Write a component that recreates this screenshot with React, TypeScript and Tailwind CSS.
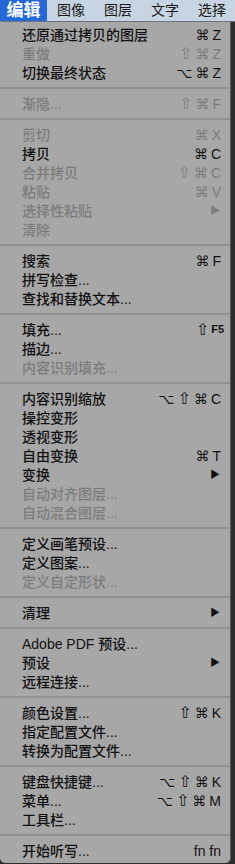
type Item = { label: string; keys?: string; disabled?: boolean; sub?: boolean; small?: boolean } | "sep";

const items: Item[] = [
  { label: "还原通过拷贝的图层", keys: "⌘Z" },
  { label: "重做", keys: "⇧⌘Z", disabled: true },
  { label: "切换最终状态", keys: "⌥⌘Z" },
  "sep",
  { label: "渐隐...", keys: "⇧⌘F", disabled: true },
  "sep",
  { label: "剪切", keys: "⌘X", disabled: true },
  { label: "拷贝", keys: "⌘C" },
  { label: "合并拷贝", keys: "⇧⌘C", disabled: true },
  { label: "粘贴", keys: "⌘V", disabled: true },
  { label: "选择性粘贴", sub: true, disabled: true },
  { label: "清除", disabled: true },
  "sep",
  { label: "搜索", keys: "⌘F" },
  { label: "拼写检查..." },
  { label: "查找和替换文本..." },
  "sep",
  { label: "填充...", keys: "⇧F5", small: true },
  { label: "描边..." },
  { label: "内容识别填充...", disabled: true },
  "sep",
  { label: "内容识别缩放", keys: "⌥⇧⌘C" },
  { label: "操控变形" },
  { label: "透视变形" },
  { label: "自由变换", keys: "⌘T" },
  { label: "变换", sub: true },
  { label: "自动对齐图层...", disabled: true },
  { label: "自动混合图层...", disabled: true },
  "sep",
  { label: "定义画笔预设..." },
  { label: "定义图案..." },
  { label: "定义自定形状...", disabled: true },
  "sep",
  { label: "清理", sub: true },
  "sep",
  { label: "Adobe PDF 预设..." },
  { label: "预设", sub: true },
  { label: "远程连接..." },
  "sep",
  { label: "颜色设置...", keys: "⇧⌘K" },
  { label: "指定配置文件..." },
  { label: "转换为配置文件..." },
  "sep",
  { label: "键盘快捷键...", keys: "⌥⇧⌘K" },
  { label: "菜单...", keys: "⌥⇧⌘M" },
  { label: "工具栏..." },
  "sep",
  { label: "开始听写...", keys: "fn fn" },
];

const font = { fontFamily: '"Liberation Sans", "Noto Sans CJK SC", sans-serif' };
const symFont = { fontFamily: '"DejaVu Sans", "Liberation Sans", sans-serif' };

function Keys({ keys, small }: { keys: string; small?: boolean }) {
  if (small) {
    return (
      <span className="flex items-center gap-[2px] mr-[-3px]">
        <span className="text-[16px] leading-none" style={symFont}>⇧</span>
        <span className="text-[11px] font-bold leading-none">F5</span>
      </span>
    );
  }
  if (keys === "fn fn") return <span className="text-[14px] leading-none">fn fn</span>;
  return (
    <span className="flex items-center gap-[3px]">
      {Array.from(keys).map((c, i) => (
        <span
          key={i}
          className={c === "⇧" ? "text-[16px] leading-none" : "text-[14px] leading-none"}
          style={c === "⌘" || c === "⇧" || c === "⌥" ? symFont : undefined}
        >
          {c}
        </span>
      ))}
    </span>
  );
}

export default function App() {
  const menus = ["图像", "图层", "文字", "选择"];
  return (
    <div className="w-[235px] h-[864px] bg-[#2e2e2e] overflow-hidden" style={font}>
      {/* Menu bar */}
      <div className="flex h-[22px] items-center bg-[#c7d4e1] border-b border-[#6d737a]">
        <div className="flex h-full w-[47px] items-center justify-center bg-[#2468d8] text-[17px] font-bold text-white">
          编辑
        </div>
        <div className="flex text-[14px] text-[#1a1a1a]">
          {menus.map((m) => (
            <span key={m} className="ml-[10px] w-[37px]">
              {m}
            </span>
          ))}
        </div>
      </div>

      {/* Dropdown */}
      <div className="w-[231px] h-[841px] bg-[#a7a7a7] border-r border-[#5a5a5a] rounded-b-[5px] pt-[3px]">
        {items.map((it, i) =>
          it === "sep" ? (
            <div key={i} className="flex h-[12px] items-center">
              <div className="h-[2px] w-full bg-[#939393]" />
            </div>
          ) : (
            <div
              key={i}
              className={`flex h-[19px] items-center justify-between pl-[22px] pr-[9px] text-[14px] ${
                it.disabled ? "text-[#7c7c7c]" : "text-[#111111]"
              }`}
            >
              <span className="font-medium leading-none">{it.label}</span>
              {it.sub ? (
                <span className="text-[10px] leading-none mr-[1px]">▶</span>
              ) : it.keys ? (
                <Keys keys={it.keys} small={it.small} />
              ) : null}
            </div>
          )
        )}
      </div>
    </div>
  );
}
